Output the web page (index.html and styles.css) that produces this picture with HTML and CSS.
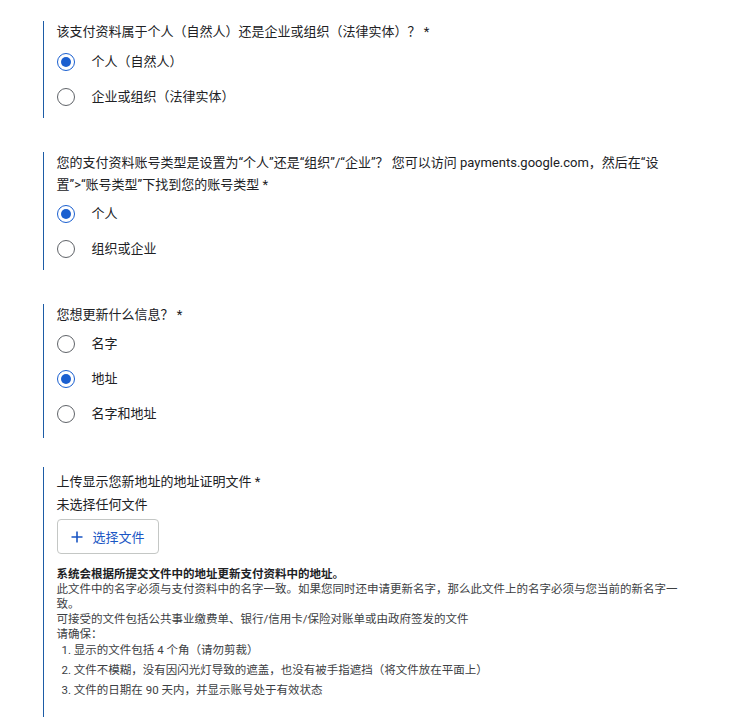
FILE: index.html
```html
<!DOCTYPE html>
<html lang="zh-CN">
<head>
<meta charset="utf-8">
<link rel="stylesheet" href="styles.css">
</head>
<body>
<div class="form">
  <section class="field">
    <div class="question">该支付资料属于个人（自然人）还是企业或组织（法律实体）？ *</div>
    <div class="options">
      <label class="option"><span class="radio checked"></span><span class="label">个人（自然人）</span></label>
      <label class="option"><span class="radio"></span><span class="label">企业或组织（法律实体）</span></label>
    </div>
  </section>

  <section class="field">
    <div class="question q-wrap">您的支付资料账号类型是设置为“个人”还是“组织”/“企业”？ 您可以访问 payments.google.com，然后在“设置”&gt;“账号类型”下找到您的账号类型 *</div>
    <div class="options options-tight">
      <label class="option"><span class="radio checked"></span><span class="label">个人</span></label>
      <label class="option"><span class="radio"></span><span class="label">组织或企业</span></label>
    </div>
  </section>

  <section class="field field-3">
    <div class="question">您想更新什么信息？ *</div>
    <div class="options options-tight">
      <label class="option"><span class="radio"></span><span class="label">名字</span></label>
      <label class="option"><span class="radio checked"></span><span class="label">地址</span></label>
      <label class="option"><span class="radio"></span><span class="label">名字和地址</span></label>
    </div>
  </section>

  <section class="field field-last">
    <div class="question q-upload">上传显示您新地址的地址证明文件 *</div>
    <div class="question q-upload">未选择任何文件</div>
    <button class="file-btn" type="button">
      <svg class="plus" width="12" height="12" viewBox="0 0 12 12"><path d="M6 0.5V11.5M0.5 6H11.5" stroke="#1a56c4" stroke-width="1.6" fill="none"/></svg>
      <span>选择文件</span>
    </button>
    <div class="help">
      <p class="strong">系统会根据所提交文件中的地址更新支付资料中的地址。</p>
      <p>此文件中的名字必须与支付资料中的名字一致。如果您同时还申请更新名字，那么此文件上的名字必须与您当前的新名字一致。</p>
      <p>可接受的文件包括公共事业缴费单、银行/信用卡/保险对账单或由政府签发的文件</p>
      <p>请确保：</p>
      <ol>
        <li>显示的文件包括 4 个角（请勿剪裁）</li>
        <li>文件不模糊，没有因闪光灯导致的遮盖，也没有被手指遮挡（将文件放在平面上）</li>
        <li>文件的日期在 90 天内，并显示账号处于有效状态</li>
      </ol>
    </div>
  </section>
</div>
</body>
</html>
```

FILE: styles.css
```css
* { box-sizing: border-box; }
html, body { margin: 0; padding: 0; background: #ffffff; }
body {
  font-family: Roboto, "Noto Sans CJK SC", sans-serif;
  color: #202124;
  font-size: 13px;
}
.form {
  padding: 21px 0 0 43px;
  display: flex;
  flex-direction: column;
  gap: 34px;
}
.field {
  border-left: 1.5px solid #1d5ca6;
  padding: 0 0 4px 12.5px;
  width: 640px;
}
.field-3 { padding-bottom: 7px; }
.field-last { margin-top: -5px; padding-top: 3px; padding-bottom: 24px; }
.question {
  line-height: 22px;
  width: 626px;
}
.q-wrap { width: 616px; }
.q-upload { line-height: 23px; }
.options {
  display: flex;
  flex-direction: column;
  margin-top: 1px;
}
.options-tight { margin-top: 0; }
.option {
  display: flex;
  align-items: center;
  height: 35px;
  gap: 17px;
}
.radio {
  width: 18px;
  height: 18px;
  border-radius: 50%;
  border: 1.6px solid #5f6368;
  display: flex;
  align-items: center;
  justify-content: center;
  flex: none;
}
.radio.checked { border-color: #1a5fd0; }
.radio.checked::after {
  content: "";
  width: 10px;
  height: 10px;
  border-radius: 50%;
  background: #1a5fd0;
}
.label { line-height: 20px; color: #202124; }
.file-btn {
  margin-top: 3px;
  width: 102px;
  height: 35px;
  border: 1px solid #c4c7c5;
  border-radius: 4px;
  background: #fff;
  display: flex;
  align-items: center;
  gap: 10px;
  padding: 0 0 0 13px;
  font-family: Roboto, "Noto Sans CJK SC", sans-serif;
  font-size: 13px;
  color: #1a56c4;
}
.plus { flex: none; }
.help {
  margin-top: 13px;
  font-size: 11.5px;
  line-height: 15px;
  color: #3c4043;
  width: 626px;
}
.help p { margin: 0; }
.help .strong { font-weight: 700; color: #202124; }
.help ol {
  margin: -2px 0 0;
  padding: 0 0 0 5px;
  list-style-position: inside;
}
.help li { line-height: 20px; }
```
